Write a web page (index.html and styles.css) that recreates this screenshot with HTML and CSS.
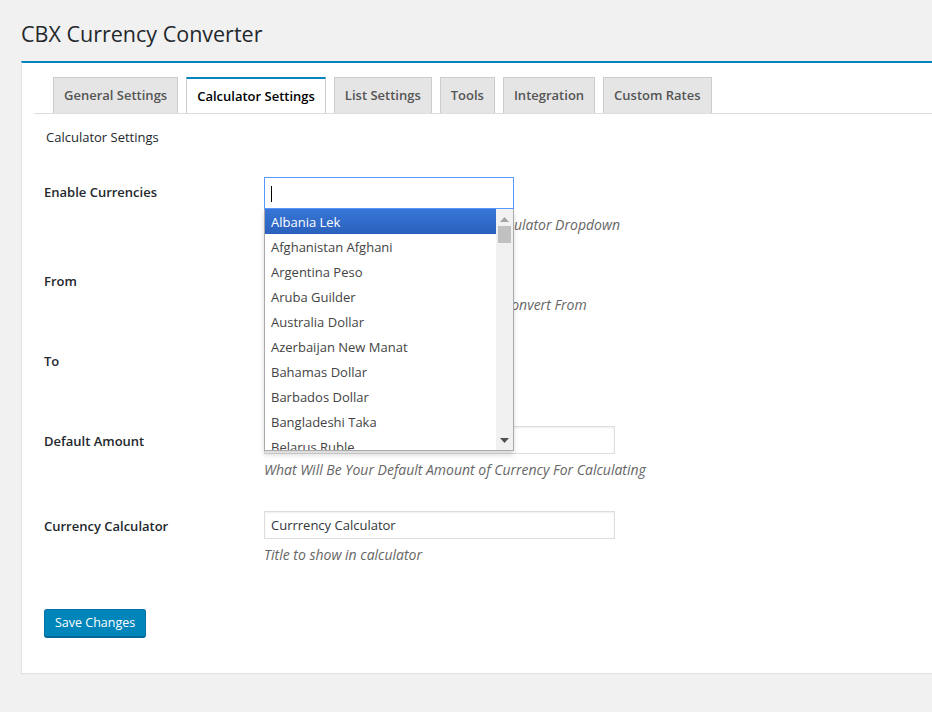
FILE: index.html
```html
<!DOCTYPE html>
<html>
<head>
<meta charset="utf-8">
<link rel="stylesheet" href="styles.css">
</head>
<body>
<div class="wrap">
  <h1 class="page-title">CBX Currency Converter</h1>
  <div class="panel">
    <nav class="tabs">
      <a class="tab">General Settings</a>
      <a class="tab tab-active">Calculator Settings</a>
      <a class="tab">List Settings</a>
      <a class="tab">Tools</a>
      <a class="tab">Integration</a>
      <a class="tab">Custom Rates</a>
    </nav>
    <div class="section-title">Calculator Settings</div>
    <form class="form">
      <div class="row">
        <div class="label">Enable Currencies</div>
        <div class="field">
          <div class="multi-wrap">
            <div class="multi-box"><span class="caret"></span></div>
            <ul class="dropdown">
              <li class="opt opt-active">Albania Lek</li>
              <li class="opt">Afghanistan Afghani</li>
              <li class="opt">Argentina Peso</li>
              <li class="opt">Aruba Guilder</li>
              <li class="opt">Australia Dollar</li>
              <li class="opt">Azerbaijan New Manat</li>
              <li class="opt">Bahamas Dollar</li>
              <li class="opt">Barbados Dollar</li>
              <li class="opt">Bangladeshi Taka</li>
              <li class="opt">Belarus Ruble</li>
              <li class="scrollbar">
                <svg class="arrow-up" width="9" height="5" viewBox="0 0 9 5"><path d="M0 5 L4.5 0 L9 5 Z" fill="#a3a3a3"/></svg>
                <span class="thumb"></span>
                <svg class="arrow-down" width="9" height="5" viewBox="0 0 9 5"><path d="M0 0 L4.5 5 L9 0 Z" fill="#505050"/></svg>
              </li>
            </ul>
          </div>
          <p class="desc desc-box">Enable Currencies That Will Show In Calculator Dropdown</p>
        </div>
      </div>
      <div class="row">
        <div class="label">From</div>
        <div class="field">
          <div class="select-box">Afghanistan Afghani</div>
          <p class="desc desc-select">Set Default Currency For Calculator To Convert From</p>
        </div>
      </div>
      <div class="row">
        <div class="label">To</div>
        <div class="field">
          <div class="select-box">Albania Lek</div>
          <p class="desc desc-select">Convert To</p>
        </div>
      </div>
      <div class="row">
        <div class="label">Default Amount</div>
        <div class="field">
          <div class="text-input">1</div>
          <p class="desc">What Will Be Your Default Amount of Currency For Calculating</p>
        </div>
      </div>
      <div class="row">
        <div class="label">Currency Calculator</div>
        <div class="field">
          <div class="text-input">Currrency Calculator</div>
          <p class="desc">Title to show in calculator</p>
        </div>
      </div>
      <div class="submit-row">
        <button type="button" class="button-primary">Save Changes</button>
      </div>
    </form>
  </div>
</div>
</body>
</html>
```

FILE: styles.css
```css
html, body {
  margin: 0;
  padding: 0;
  background: #f1f1f1;
  overflow: hidden;
}
body {
  font-family: "Open Sans", "Noto Sans", sans-serif;
  font-size: 13px;
  color: #444;
  width: 932px;
  height: 712px;
}
.wrap {
  padding-left: 21px;
}
.page-title {
  margin: 0;
  padding-top: 19px;
  height: 42px;
  box-sizing: border-box;
  font-size: 21.5px;
  line-height: 30px;
  font-weight: 400;
  color: #23282d;
}
.panel {
  background: #fff;
  border-top: 2px solid #0085ba;
  border-left: 1px solid #e5e5e5;
  box-shadow: 0 1px 1px rgba(0,0,0,.06);
  height: 612px;
  box-sizing: border-box;
  margin-top: 19px;
  padding-top: 14px;
}
.tabs {
  display: flex;
  margin-left: 12px;
  padding-left: 11px;
  border-bottom: 1px solid #ddd;
  height: 36px;
}
.tab {
  display: block;
  margin-left: 8px;
  padding: 0 10px;
  height: 36px;
  line-height: 35px;
  box-sizing: border-box;
  border: 1px solid #ccc;
  border-bottom: none;
  background: #e5e5e5;
  color: #555;
  font-size: 13px;
  font-weight: 600;
  white-space: nowrap;
}
.tab-active {
  background: #fff;
  color: #000;
  border-top: 2px solid #0085ba;
  line-height: 34px;
}
.section-title {
  margin: 13px 0 0 24px;
  line-height: 20px;
  color: #23282d;
}
.form {
  margin: 30px 0 0 22px;
}
.row {
  display: flex;
  margin-bottom: 31px;
}
.label {
  width: 220px;
  flex: none;
  padding-top: 5px;
  line-height: 20px;
  font-weight: 600;
  color: #23282d;
}
.field {
  width: 351px;
}
.multi-wrap {
  position: relative;
  width: 250px;
}
.multi-box {
  height: 32px;
  box-sizing: border-box;
  border: 1px solid #5897fb;
  background: #fff;
  position: relative;
}
.caret {
  position: absolute;
  left: 6px;
  top: 8px;
  width: 1px;
  height: 16px;
  background: #000;
}
.dropdown {
  position: absolute;
  left: 0;
  top: 32px;
  margin: 0;
  padding: 0 17px 0 0;
  list-style: none;
  width: 250px;
  height: 242px;
  box-sizing: border-box;
  overflow: hidden;
  background: #fff;
  border: 1px solid #aaa;
  border-top: none;
  box-shadow: 0 4px 5px rgba(0,0,0,.15);
  z-index: 5;
}
.opt {
  height: 25px;
  line-height: 26px;
  padding-left: 6px;
  color: #444;
  white-space: nowrap;
}
.opt-active {
  background: linear-gradient(#3875d7, #2a62bc);
  color: #fff;
}
.scrollbar {
  position: absolute;
  top: 0;
  right: 0;
  width: 17px;
  height: 100%;
  background: #f1f1f1;
  display: flex;
  flex-direction: column;
  align-items: center;
}
.arrow-up {
  margin-top: 8px;
}
.thumb {
  display: block;
  width: 13px;
  height: 17px;
  margin-top: 4px;
  background: #c1c1c1;
}
.arrow-down {
  margin-top: auto;
  margin-bottom: 7px;
}
.desc {
  margin: 6px 0 0;
  font-size: 14px;
  line-height: 20px;
  font-style: italic;
  color: #666;
  white-space: nowrap;
}
.desc-select {
  margin-top: 1px;
}
.select-box {
  height: 28px;
  width: 250px;
  box-sizing: border-box;
  border: 1px solid #ddd;
  background: #fff;
  padding-left: 6px;
  line-height: 26px;
  color: #32373c;
}
.text-input {
  height: 28px;
  box-sizing: border-box;
  border: 1px solid #ddd;
  box-shadow: inset 0 1px 2px rgba(0,0,0,.07);
  background: #fff;
  padding-left: 6px;
  line-height: 26px;
  color: #32373c;
}
.submit-row {
  padding-top: 13px;
}
.button-primary {
  font-family: inherit;
  font-size: 12.5px;
  height: 28px;
  padding: 0 10px 1px;
  background: #0085ba;
  border: 1px solid #0073aa;
  border-bottom-color: #006799;
  box-shadow: 0 1px 0 #006799;
  border-radius: 3px;
  color: #fff;
  cursor: pointer;
}
```
